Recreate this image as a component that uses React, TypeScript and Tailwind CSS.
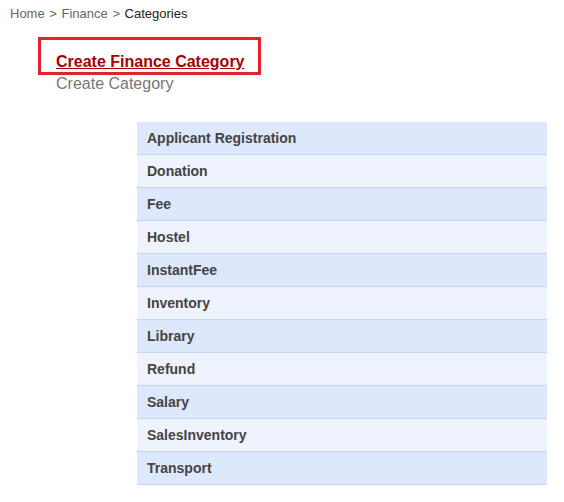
import React from "react";

const cats = [
  "Applicant Registration",
  "Donation",
  "Fee",
  "Hostel",
  "InstantFee",
  "Inventory",
  "Library",
  "Refund",
  "Salary",
  "SalesInventory",
  "Transport",
];

export default function App() {
  return (
    <div className="w-[564px] h-[502px] bg-white font-['Liberation_Sans',Arial,sans-serif] overflow-hidden">
      <div className="pl-[10px] pt-[6px] text-[13px] leading-[16px] text-[#666]">
        Home <span className="mx-[1px]">&gt;</span> Finance <span className="mx-[1px]">&gt;</span>{" "}
        <span className="text-[#222]">Categories</span>
      </div>
      <div className="ml-[38px] mt-[15px] w-[223px] h-[38px] border-[3px] border-[#e4222a] pl-[15px] pt-[10px]">
        <a href="#" className="text-[16px] leading-[18px] font-bold text-[#a80000] underline">
          Create Finance Category
        </a>
      </div>
      <div className="ml-[56px] text-[16px] leading-[18px] text-[#777]">Create Category</div>
      <div className="ml-[137px] mt-[29px] w-[410px]">
        {cats.map((c, i) => (
          <div
            key={c}
            className={`h-[33px] border-b border-[#c3d5f6] pl-[10px] text-[14px] leading-[32px] font-bold text-[#444] ${
              i % 2 === 0 ? "bg-[#dde8fc]" : "bg-[#eef3fd]"
            }`}
          >
            {c}
          </div>
        ))}
      </div>
    </div>
  );
}
